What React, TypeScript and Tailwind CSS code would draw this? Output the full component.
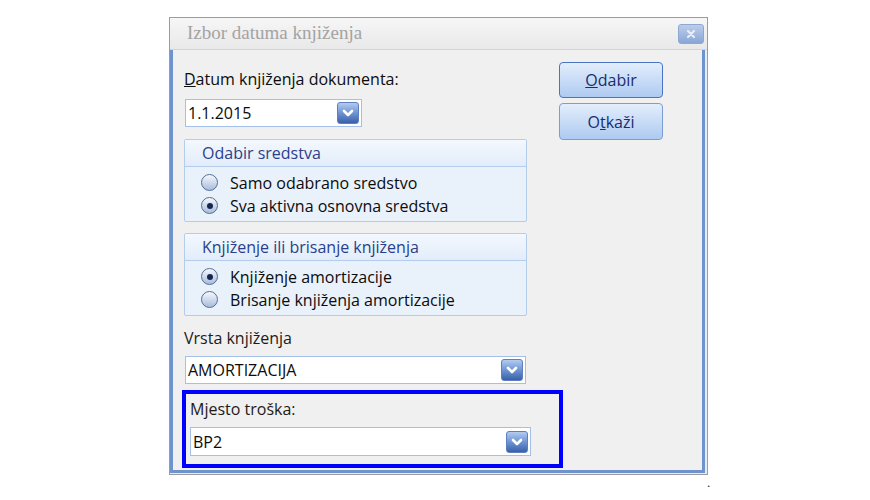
const font = { fontFamily: '"Open Sans", "Noto Sans", sans-serif' };

function DropButton() {
  return (
    <div className="flex h-[22px] w-[22px] items-center justify-center rounded-[3px] border border-[#5b7fc0] bg-linear-to-b from-[#b3cbf0] via-[#6f94d4] to-[#3a60a9]">
      <svg width="12" height="8" viewBox="0 0 12 8">
        <path
          d="M2 2 L6 6 L10 2"
          stroke="white"
          strokeWidth="2.6"
          fill="none"
          strokeLinecap="round"
          strokeLinejoin="round"
        />
      </svg>
    </div>
  );
}

function Combo({ value, width, height = 28 }: { value: string; width: number; height?: number }) {
  return (
    <div
      className="flex items-center justify-between border border-[#a5c0e8] bg-white pl-[2px] pr-[2px]"
      style={{ width, height }}
    >
      <span className="text-[16px] font-medium leading-none text-[#0c0c0c]">{value}</span>
      <DropButton />
    </div>
  );
}

function Radio({ checked, label }: { checked?: boolean; label: string }) {
  return (
    <div className="flex h-[23px] items-center pl-[16px]">
      <div className="flex h-[17px] w-[17px] items-center justify-center rounded-full border border-[#536e96] bg-linear-to-b from-[#f6f9fd] to-[#a9bcdb]">
        {checked && <div className="h-[6px] w-[6px] rounded-full bg-[#17264f]" />}
      </div>
      <span className="ml-[12px] text-[16px] font-medium text-[#0c0c0c]">{label}</span>
    </div>
  );
}

function Group({ title, children }: { title: string; children: React.ReactNode }) {
  return (
    <div className="h-[83px] w-[343px] rounded-[2px] border border-[#b5cdec] bg-[#e9f1fb]">
      <div className="flex h-[27px] items-center border-b border-[#b5cdec] bg-linear-to-b from-[#f4f8fe] to-[#e2ecf9] pl-[17px] text-[16px] font-medium text-[#2a3f8c]">
        {title}
      </div>
      <div className="pt-[4px]">{children}</div>
    </div>
  );
}

function DlgButton({ children, isDefault }: { children: React.ReactNode; isDefault?: boolean }) {
  return (
    <div
      className={
        "flex w-[104px] items-center justify-center rounded-[4px] border bg-linear-to-b from-[#e3eefc] to-[#aecaf1] text-[16px] font-medium text-[#1b2c6c] " +
        (isDefault ? "h-[36px] border-[#4a73c4]" : "h-[37px] border-[#7d9cd6]")
      }
    >
      {children}
    </div>
  );
}

export default function App() {
  return (
    <div className="flex items-start bg-white pl-[169px] pt-[17px]" style={font}>
      <div className="w-[539px] shrink-0 border border-[#9c9c9c] bg-[#e6ecf5] pr-[2px] pb-[1px]">
        <div className="-mr-[2px] flex h-[32px] items-center justify-between border-b border-[#d3d3d3] bg-linear-to-b from-[#f6f6f6] to-[#e9e9e9] pl-[17px] pr-[3px]">
          <span
            className="text-[19px] text-[#a3a3a3]"
            style={{ fontFamily: '"Liberation Serif", serif' }}
          >
            Izbor datuma knjiženja
          </span>
          <div className="flex h-[20px] w-[26px] items-center justify-center rounded-[3px] border border-[#8fa8d2] bg-linear-to-b from-[#bccdea] to-[#8aa6d6]">
            <svg width="10" height="10" viewBox="0 0 10 10">
              <path d="M2 2 L8 8 M8 2 L2 8" stroke="#e8eef8" strokeWidth="2.2" strokeLinecap="round" />
            </svg>
          </div>
        </div>
        <div className="flex h-[423px] border-x-[3px] border-b-[3px] border-[#6f93cf] bg-[#f0f0f0]">
          <div className="flex w-[354px] shrink-0 flex-col pl-[11px]">
            <div className="mt-[19px] h-[20px] text-[16px] font-medium leading-[20px] text-[#0c0c0c]">
              <span className="underline">D</span>atum knjiženja dokumenta:
            </div>
            <div className="mt-[10px] ml-[1px]">
              <Combo value="1.1.2015" width={177} />
            </div>
            <div className="mt-[12px]">
              <Group title="Odabir sredstva">
                <Radio label="Samo odabrano sredstvo" />
                <Radio checked label="Sva aktivna osnovna sredstva" />
              </Group>
            </div>
            <div className="mt-[11px]">
              <Group title="Knjiženje ili brisanje knjiženja">
                <Radio checked label="Knjiženje amortizacije" />
                <Radio label="Brisanje knjiženja amortizacije" />
              </Group>
            </div>
            <div className="mt-[12px] h-[20px] text-[16px] font-medium leading-[20px] text-[#1e1a18]">
              Vrsta knjiženja
            </div>
            <div className="mt-[8px] ml-[1px]">
              <Combo value="AMORTIZACIJA" width={341} />
            </div>
            <div className="mt-[6px] -ml-[2px] h-[78px] w-[381px] shrink-0 border-4 border-[#0000ff] pl-[4px]">
              <div className="mt-[5px] h-[20px] text-[16px] font-medium leading-[20px] text-[#1e1a18]">
                Mjesto troška:
              </div>
              <div className="mt-[8px]">
                <Combo value="BP2" width={341} height={29} />
              </div>
            </div>
          </div>
          <div className="ml-[32px] flex flex-col gap-[5px] pt-[12px]">
            <DlgButton isDefault>
              <span>
                <span className="underline">O</span>dabir
              </span>
            </DlgButton>
            <DlgButton>
              <span>
                O<span className="underline">t</span>kaži
              </span>
            </DlgButton>
          </div>
        </div>
      </div>
      <span className="-ml-[1px] mt-[456px] text-[14px] leading-none text-black">¸</span>
    </div>
  );
}
